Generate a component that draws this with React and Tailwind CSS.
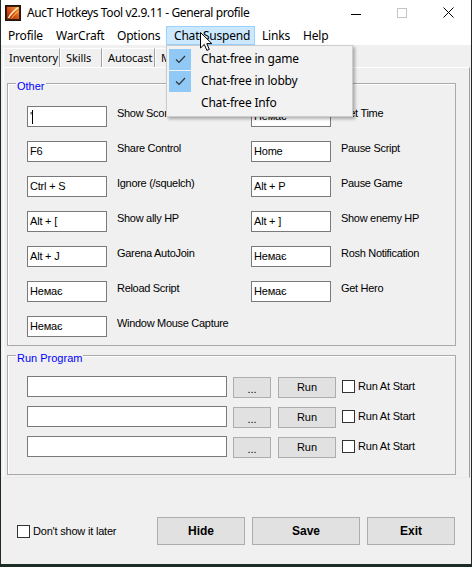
import React from 'react';

const SANS = "font-['Liberation_Sans',Arial,sans-serif]";
const UI = "font-['Noto_Sans','Open_Sans',sans-serif]";

const leftKeys = [
  { value: 'caret', label: 'Show Score' },
  { value: 'F6', label: 'Share Control' },
  { value: 'Ctrl + S', label: 'Ignore (/squelch)' },
  { value: 'Alt + [', label: 'Show ally HP' },
  { value: 'Alt + J', label: 'Garena AutoJoin' },
  { value: 'Немає', label: 'Reload Script' },
  { value: 'Немає', label: 'Window Mouse Capture' },
];

const rightKeys = [
  { value: 'Немає', label: 'Get Time' },
  { value: 'Home', label: 'Pause Script' },
  { value: 'Alt + P', label: 'Pause Game' },
  { value: 'Alt + ]', label: 'Show enemy HP' },
  { value: 'Немає', label: 'Rosh Notification' },
  { value: 'Немає', label: 'Get Hero' },
];

const menus = [
  { name: 'Profile', w: 'w-[48px]' },
  { name: 'WarCraft', w: 'w-[61px]' },
  { name: 'Options', w: 'w-[56px]' },
  { name: 'Chat-Suspend', w: 'w-[89px]', active: true },
  { name: 'Links', w: 'w-[41px]' },
  { name: 'Help', w: 'w-[40px]' },
];

const tabs = [
  { name: 'Inventory', w: 'w-[57px]' },
  { name: 'Skills', w: 'w-[42px]' },
  { name: 'Autocast', w: 'w-[53px]' },
  { name: 'Misc', w: 'w-[40px]' },
];

function AppIcon() {
  return (
    <svg width="16" height="16" viewBox="0 0 16 16">
      <defs>
        <linearGradient id="flame" x1="0" y1="1" x2="1" y2="0">
          <stop offset="0" stopColor="#9a1f08" />
          <stop offset="0.5" stopColor="#d9571a" />
          <stop offset="1" stopColor="#f4a640" />
        </linearGradient>
      </defs>
      <rect x="0.5" y="0.5" width="15" height="15" fill="#3b1d0e" stroke="#24140b" />
      <rect x="2" y="2" width="12" height="12" fill="url(#flame)" />
      <path d="M3.5 13 C5.5 9 8 6.5 13 2.5" stroke="#fff1c4" strokeWidth="1.6" fill="none" />
      <path d="M6.5 13.5 C8.5 10.5 10.5 8.5 13.5 6.5" stroke="#ffcf5a" strokeWidth="1" fill="none" />
    </svg>
  );
}

function Group({ title, className, children }) {
  return (
    <div className={`relative border border-[#a9a9a9] shadow-[inset_1px_1px_0_#fff] ${className}`}>
      <span className="absolute left-[8px] -top-[4px] px-[1px] bg-[#f0f0f0] text-[#0000ff] text-[11px] leading-[13px]">
        {title}
      </span>
      {children}
    </div>
  );
}

function HotkeyRow({ value, label }) {
  return (
    <div className="flex items-start h-[21px]">
      <div className="w-[80px] h-[21px] shrink-0 bg-white border border-[#7a7a7a] flex items-center pl-[2px] text-[11px] tracking-[-0.2px]">
        {value === 'caret' ? (
          <>
            <span>'</span>
            <span className="w-px h-[14px] bg-black" />
          </>
        ) : (
          value
        )}
      </div>
      <span className="ml-[10px] mt-[1px] text-[11px] leading-[13px] tracking-[-0.3px] whitespace-nowrap">{label}</span>
    </div>
  );
}

function Checkbox() {
  return <span className="w-[13px] h-[13px] shrink-0 bg-white border border-[#333]" />;
}

function RunRow() {
  return (
    <div className="flex items-start h-[21px]">
      <div className="w-[200px] h-[21px] bg-white border border-[#7a7a7a]" />
      <button className="ml-[6px] mt-px w-[38px] h-[21px] bg-[#e1e1e1] border border-[#adadad] text-[11px] leading-[19px] pt-[2px]">
        ...
      </button>
      <button className="ml-[7px] mt-px w-[58px] h-[21px] bg-[#e1e1e1] border border-[#adadad] text-[11px] leading-[19px]">
        Run
      </button>
      <div className="ml-[6px] mt-[4px] flex items-center">
        <Checkbox />
        <span className="ml-[3px] text-[11px] leading-[13px] tracking-[-0.2px]">Run At Start</span>
      </div>
    </div>
  );
}

export default function App() {
  return (
    <div className={`w-[472px] h-[567px] bg-[#1e2b25] overflow-hidden ${SANS} text-black`}>
      <div className="relative ml-[1px] w-[470px] h-[564px] bg-[#f0f0f0] flex flex-col">
        {/* title bar */}
        <div className={`h-[26px] bg-white flex items-center ${UI}`}>
          <div className="ml-[4px]">
            <AppIcon />
          </div>
          <span className="ml-[6px] text-[12px] tracking-[-0.4px] whitespace-nowrap">
            AucT Hotkeys Tool v2.9.11 - General profile
          </span>
          <div className="ml-auto flex h-full">
            <div className="w-[46px] h-full flex items-center justify-center">
              <span className="w-[10px] h-px bg-black mt-[2px]" />
            </div>
            <div className="w-[46px] h-full flex items-center justify-center">
              <span className="w-[10px] h-[10px] border border-[#c4c4c4] -mt-[1px]" />
            </div>
            <div className="w-[46px] h-full flex items-center justify-center">
              <svg width="11" height="11" viewBox="0 0 11 11" className="-mt-[1px]">
                <path d="M0.5 0.5 L10.5 10.5 M10.5 0.5 L0.5 10.5" stroke="#000" strokeWidth="1" />
              </svg>
            </div>
          </div>
        </div>

        {/* menu bar */}
        <div className={`h-[19px] bg-white flex ${UI} text-[12px]`}>
          {menus.map((m) => (
            <div
              key={m.name}
              className={`${m.w} h-full pl-[7px] flex items-center whitespace-nowrap tracking-[-0.2px] ${
                m.active ? 'bg-[#cce8ff] border border-[#99d1ff] pl-[6px]' : ''
              }`}
            >
              {m.name}
            </div>
          ))}
        </div>

        {/* tabs */}
        <div className={`h-[22px] pl-[2px] flex items-end ${UI}`}>
          {tabs.map((t) => (
            <div
              key={t.name}
              className={`${t.w} h-[19px] border-t border-l border-white border-r border-r-[#a0a0a0] pl-[5px] text-[11px] leading-[17px] tracking-[-0.1px] whitespace-nowrap overflow-hidden`}
            >
              {t.name}
            </div>
          ))}
        </div>

        {/* tab page */}
        <div className="ml-[2px] w-[467px] h-[411px] border border-white border-r-[#a0a0a0] border-b-[#ebebeb]">
          <Group title="Other" className="mt-[15px] ml-[3px] w-[449px] h-[263px]">
            <div className="flex pt-[22px] pl-[19px]">
              <div className="w-[224px] flex flex-col gap-[14px]">
                {leftKeys.map((k) => (
                  <HotkeyRow key={k.label} value={k.value} label={k.label} />
                ))}
              </div>
              <div className="flex flex-col gap-[14px]">
                {rightKeys.map((k) => (
                  <HotkeyRow key={k.label} value={k.value} label={k.label} />
                ))}
              </div>
            </div>
          </Group>

          <Group title="Run Program" className="mt-[9px] ml-[3px] w-[449px] h-[120px]">
            <div className="flex flex-col gap-[9px] pt-[20px] pl-[19px]">
              <RunRow />
              <RunRow />
              <RunRow />
            </div>
          </Group>
        </div>

        {/* bottom */}
        <div className="mt-[39px] pl-[16px] pr-[16px] flex items-center justify-between">
          <div className="flex items-center">
            <Checkbox />
            <span className="ml-[3px] text-[11px] tracking-[-0.2px]">Don't show it later</span>
          </div>
          <div className="flex gap-[7px]">
            <button className="w-[88px] h-[28px] bg-[#e1e1e1] border border-[#adadad] font-bold text-[12px]">Hide</button>
            <button className="w-[108px] h-[28px] bg-[#e1e1e1] border border-[#adadad] font-bold text-[12px]">Save</button>
            <button className="w-[88px] h-[28px] bg-[#e1e1e1] border border-[#adadad] font-bold text-[12px]">Exit</button>
          </div>
        </div>

        {/* Chat-Suspend dropdown */}
        <div
          className={`absolute left-[165px] top-[45px] w-[187px] h-[72px] bg-[#f2f2f2] border border-[#cccccc] shadow-[2px_2px_3px_rgba(0,0,0,0.3)] pt-[2px] pl-[2px] flex flex-col ${UI} text-[12px]`}
        >
          {[
            { text: 'Chat-free in game', checked: true },
            { text: 'Chat-free in lobby', checked: true },
            { text: 'Chat-free Info', checked: false },
          ].map((item) => (
            <div key={item.text} className="h-[22px] flex items-center">
              <div
                className={`w-[22px] h-[21px] flex items-center justify-center ${
                  item.checked ? 'bg-[#90c8f6]' : ''
                }`}
              >
                {item.checked && (
                  <svg width="11" height="9" viewBox="0 0 11 9">
                    <path d="M1 4.5 L4 7.5 L10 1" stroke="#333" strokeWidth="1.2" fill="none" />
                  </svg>
                )}
              </div>
              <span className="ml-[10px] tracking-[-0.2px] whitespace-nowrap">{item.text}</span>
            </div>
          ))}
        </div>

        {/* mouse pointer */}
        <svg className="absolute left-[199px] top-[32px]" width="13" height="20" viewBox="0 0 13 20">
          <path
            d="M0.5 0.5 L0.5 16 L4.3 12.4 L6.9 18.4 L9.3 17.4 L6.8 11.6 L11.8 11.6 Z"
            fill="#fff"
            stroke="#000"
            strokeWidth="1"
            strokeLinejoin="round"
          />
        </svg>
      </div>
    </div>
  );
}
